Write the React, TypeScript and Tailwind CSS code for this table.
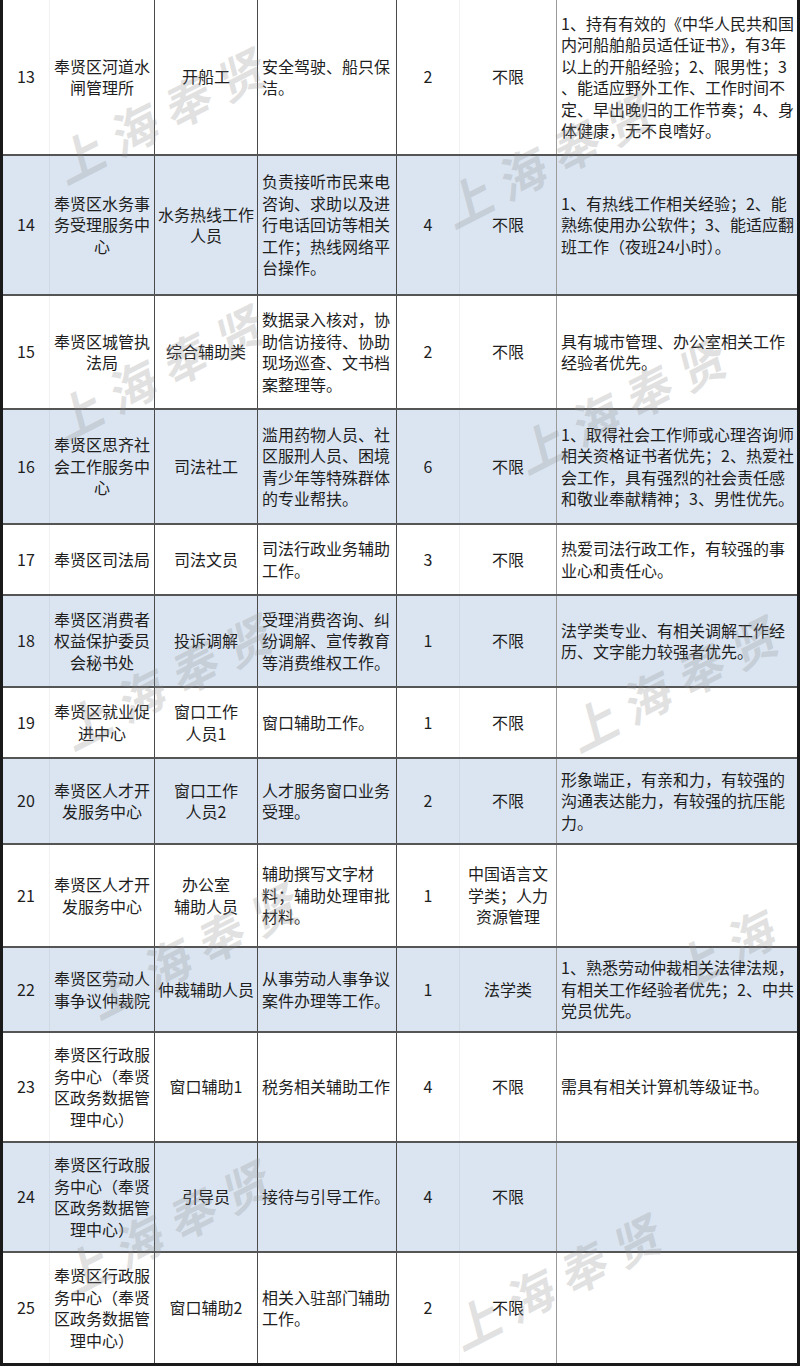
type Row = {
  no: string
  dept: string[]
  pos: string[]
  duty: string[]
  count: string
  major: string[]
  req: string[]
  h: string
  blue: boolean
}

const rows: Row[] = [
  {
    no: '13',
    dept: ['奉贤区河道水', '闸管理所'],
    pos: ['开船工'],
    duty: ['安全驾驶、船只保', '洁。'],
    count: '2',
    major: ['不限'],
    req: [
      '1、持有有效的《中华人民共和国',
      '内河船舶船员适任证书》，有3年',
      '以上的开船经验；2、限男性；3',
      '、能适应野外工作、工作时间不',
      '定、早出晚归的工作节奏；4、身',
      '体健康，无不良嗜好。',
    ],
    h: 'h-[156px]',
    blue: false,
  },
  {
    no: '14',
    dept: ['奉贤区水务事', '务受理服务中', '心'],
    pos: ['水务热线工作', '人员'],
    duty: ['负责接听市民来电', '咨询、求助以及进', '行电话回访等相关', '工作；热线网络平', '台操作。'],
    count: '4',
    major: ['不限'],
    req: ['1、有热线工作相关经验；2、能', '熟练使用办公软件；3、能适应翻', '班工作（夜班24小时）。'],
    h: 'h-[140px]',
    blue: true,
  },
  {
    no: '15',
    dept: ['奉贤区城管执', '法局'],
    pos: ['综合辅助类'],
    duty: ['数据录入核对，协', '助信访接待、协助', '现场巡查、文书档', '案整理等。'],
    count: '2',
    major: ['不限'],
    req: ['具有城市管理、办公室相关工作', '经验者优先。'],
    h: 'h-[114px]',
    blue: false,
  },
  {
    no: '16',
    dept: ['奉贤区思齐社', '会工作服务中', '心'],
    pos: ['司法社工'],
    duty: ['滥用药物人员、社', '区服刑人员、困境', '青少年等特殊群体', '的专业帮扶。'],
    count: '6',
    major: ['不限'],
    req: [
      '1、取得社会工作师或心理咨询师',
      '相关资格证书者优先；2、热爱社',
      '会工作，具有强烈的社会责任感',
      '和敬业奉献精神；3、男性优先。',
    ],
    h: 'h-[115px]',
    blue: true,
  },
  {
    no: '17',
    dept: ['奉贤区司法局'],
    pos: ['司法文员'],
    duty: ['司法行政业务辅助', '工作。'],
    count: '3',
    major: ['不限'],
    req: ['热爱司法行政工作，有较强的事', '业心和责任心。'],
    h: 'h-[71px]',
    blue: false,
  },
  {
    no: '18',
    dept: ['奉贤区消费者', '权益保护委员', '会秘书处'],
    pos: ['投诉调解'],
    duty: ['受理消费咨询、纠', '纷调解、宣传教育', '等消费维权工作。'],
    count: '1',
    major: ['不限'],
    req: ['法学类专业、有相关调解工作经', '历、文字能力较强者优先。'],
    h: 'h-[92px]',
    blue: true,
  },
  {
    no: '19',
    dept: ['奉贤区就业促', '进中心'],
    pos: ['窗口工作', '人员1'],
    duty: ['窗口辅助工作。'],
    count: '1',
    major: ['不限'],
    req: [],
    h: 'h-[71px]',
    blue: false,
  },
  {
    no: '20',
    dept: ['奉贤区人才开', '发服务中心'],
    pos: ['窗口工作', '人员2'],
    duty: ['人才服务窗口业务', '受理。'],
    count: '2',
    major: ['不限'],
    req: ['形象端正，有亲和力，有较强的', '沟通表达能力，有较强的抗压能', '力。'],
    h: 'h-[86px]',
    blue: true,
  },
  {
    no: '21',
    dept: ['奉贤区人才开', '发服务中心'],
    pos: ['办公室', '辅助人员'],
    duty: ['辅助撰写文字材', '料；辅助处理审批', '材料。'],
    count: '1',
    major: ['中国语言文', '学类；人力', '资源管理'],
    req: [],
    h: 'h-[103px]',
    blue: false,
  },
  {
    no: '22',
    dept: ['奉贤区劳动人', '事争议仲裁院'],
    pos: ['仲裁辅助人员'],
    duty: ['从事劳动人事争议', '案件办理等工作。'],
    count: '1',
    major: ['法学类'],
    req: ['1、熟悉劳动仲裁相关法律法规，', '有相关工作经验者优先；2、中共', '党员优先。'],
    h: 'h-[85px]',
    blue: true,
  },
  {
    no: '23',
    dept: ['奉贤区行政服', '务中心（奉贤', '区政务数据管', '理中心）'],
    pos: ['窗口辅助1'],
    duty: ['税务相关辅助工作'],
    count: '4',
    major: ['不限'],
    req: ['需具有相关计算机等级证书。'],
    h: 'h-[110px]',
    blue: false,
  },
  {
    no: '24',
    dept: ['奉贤区行政服', '务中心（奉贤', '区政务数据管', '理中心）'],
    pos: ['引导员'],
    duty: ['接待与引导工作。'],
    count: '4',
    major: ['不限'],
    req: [],
    h: 'h-[110px]',
    blue: true,
  },
  {
    no: '25',
    dept: ['奉贤区行政服', '务中心（奉贤', '区政务数据管', '理中心）'],
    pos: ['窗口辅助2'],
    duty: ['相关入驻部门辅助', '工作。'],
    count: '2',
    major: ['不限'],
    req: [],
    h: 'h-[110px]',
    blue: false,
  },
]

// watermark centres, read off the reference
const marks = [
  { pos: 'left-[167px] top-[110px]', text: '上海奉贤' },
  { pos: 'left-[555px] top-[154px]', text: '上海奉贤' },
  { pos: 'left-[165px] top-[367px]', text: '上海奉贤' },
  { pos: 'left-[628px] top-[400px]', text: '上海奉贤' },
  { pos: 'left-[174px] top-[676px]', text: '上海奉贤' },
  { pos: 'left-[680px] top-[678px]', text: '上海奉贤' },
  { pos: 'left-[200px] top-[945px]', text: '上海奉贤' },
  { pos: 'left-[730px] top-[944px]', text: '上海' },
  { pos: 'left-[172px] top-[1222px]', text: '上海奉贤' },
  { pos: 'left-[563px] top-[1276px]', text: '上海奉贤' },
]

function Cell({ lines, className }: { lines: string[]; className: string }) {
  return (
    <div className={`flex h-full flex-col justify-center ${className}`}>
      {lines.map((l, i) => (
        <span key={i} className="whitespace-nowrap">
          {l}
        </span>
      ))}
    </div>
  )
}

export default function App() {
  return (
    <div
      className="relative w-[800px] h-[1367px] overflow-hidden bg-white text-[16px] leading-[21.5px] text-[#1e1e1e]"
      style={{ fontFamily: '"Noto Sans CJK SC", "Noto Sans", sans-serif' }}
    >
      <div className="border-l-[3px] border-r-[3px] border-b-[3px] border-[#1a1a1a]">
        {rows.map((r, i) => (
          <div
            key={r.no}
            className={`grid grid-cols-[47px_105px_103px_139px_63px_97px_240px] ${r.h} ${
              i === rows.length - 1 ? '' : 'border-b-2 border-[#555]'
            } ${r.blue ? 'bg-[#dbe5f1]' : 'bg-white'}`}
          >
            <Cell lines={[r.no]} className="items-center border-r border-black/5" />
            <Cell lines={r.dept} className="items-center border-r border-[#4a4a4a]" />
            <Cell lines={r.pos} className="items-center border-r border-[#4a4a4a]" />
            <Cell lines={r.duty} className="items-start pl-[4px] border-r border-[#4a4a4a]" />
            <Cell lines={[r.count]} className="items-center border-r border-black/5" />
            <Cell lines={r.major} className="items-center border-r border-[#9a9a9a]" />
            <Cell lines={r.req} className="items-start pl-[4px]" />
          </div>
        ))}
      </div>

      {marks.map((m) => (
        <div
          key={m.pos}
          className={`pointer-events-none absolute ${m.pos} -translate-x-1/2 -translate-y-1/2 -rotate-[27deg] -skew-x-12 whitespace-nowrap text-[48px] leading-none font-bold tracking-[12px] text-[#8a8a8a]/25`}
        >
          {m.text}
        </div>
      ))}
    </div>
  )
}
